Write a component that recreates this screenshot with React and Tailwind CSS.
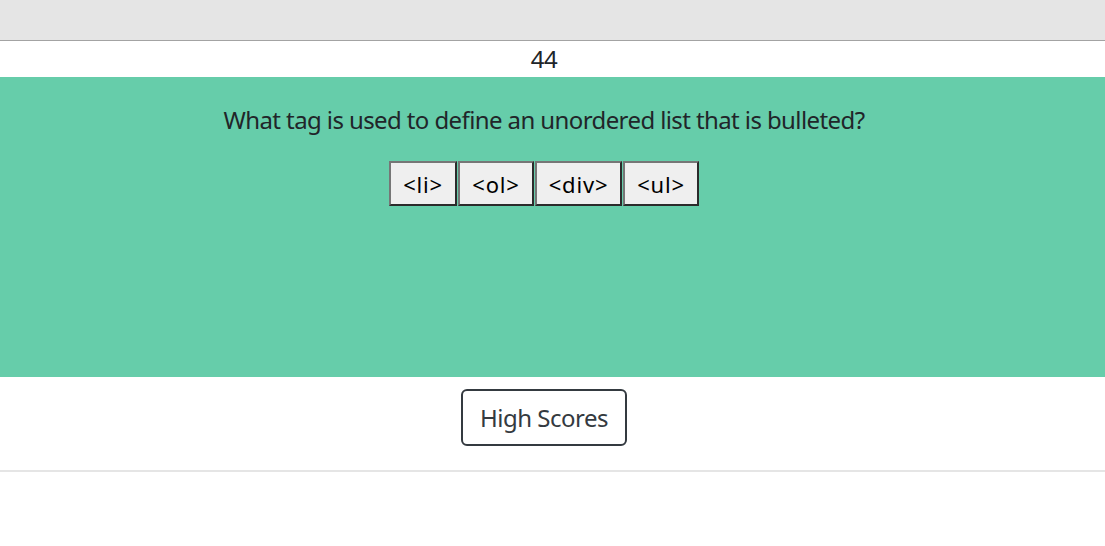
export default function App() {
  const opts = [
    ["<li>", "w-[68px]"],
    ["<ol>", "w-[76px]"],
    ["<div>", "w-[87px]"],
    ["<ul>", "w-[76px]"],
  ];
  return (
    <div className="w-[1105px] h-[546px] bg-white overflow-hidden" style={{ fontFamily: '"Noto Sans", "Open Sans", sans-serif' }}>
      <div className="h-[41px] bg-[#e5e5e5] border-b border-[#a3a3a3]" />
      <div className="w-[1088px] h-[36px] flex items-center justify-center text-[24px] leading-[36px] tracking-[-0.5px] text-[#212529]">44</div>
      <div className="h-[300px] bg-[#66cdaa]">
        <div className="w-[1088px] flex flex-col items-center">
          <p className="mt-[25px] text-[24px] leading-[36px] tracking-[-0.6px] text-[#212529]">What tag is used to define an unordered list that is bulleted?</p>
          <div className="mt-[23px] flex gap-[1px]">
            {opts.map(([o, w]) => (
              <button
                key={o}
                className={`${w} h-[45px] bg-[#efefef] font-['Noto_Sans',sans-serif] text-[22px] tracking-[0.8px] leading-none text-black border-2 border-t-[#767676] border-l-[#767676] border-r-[#2b2b2b] border-b-[#2b2b2b]`}
              >
                {o}
              </button>
            ))}
          </div>
        </div>
      </div>
      <div className="border-b-2 border-[#e5e5e5]">
        <div className="w-[1088px] flex justify-center pt-[12px] pb-[24px]">
          <button className="w-[166px] h-[57px] rounded-[6px] border-2 border-[#343a40] text-[24px] tracking-[-0.5px] text-[#343a40]">High Scores</button>
        </div>
      </div>
    </div>
  );
}
